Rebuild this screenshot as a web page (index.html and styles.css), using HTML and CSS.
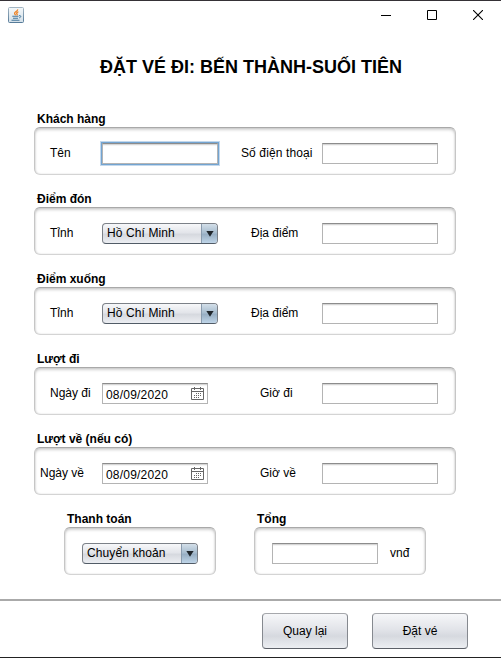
FILE: index.html
```
<!DOCTYPE html>
<html lang="vi">
<head>
<meta charset="utf-8">
<title>Đặt vé</title>
<link rel="stylesheet" href="styles.css">
</head>
<body>
<div class="window">
  <header class="titlebar">
    <svg class="app-icon" width="16" height="16" viewBox="0 0 16 16">
      <defs>
        <linearGradient id="tile" x1="0" y1="0" x2="0" y2="1"><stop offset="0" stop-color="#f4f8fa"/><stop offset="1" stop-color="#d3dfe8"/></linearGradient>
        <linearGradient id="edge" x1="0" y1="0" x2="0" y2="1"><stop offset="0" stop-color="#a3b5c3"/><stop offset="1" stop-color="#567b99"/></linearGradient>
      </defs>
      <rect x=".5" y=".5" width="15" height="15" rx="1" fill="url(#tile)" stroke="url(#edge)"/>
      <path d="M9.7 2.3C10 4.2 6.2 4.7 6.6 6.4c.1.7.7 1.2 1 1.8M10.4 4.8C8.7 5.4 8.2 6.2 9 7c.4.4.2.9-.3 1.4" fill="none" stroke="#ef7d1a" stroke-width="1.2"/>
      <path d="M4.3 9.2h6.2M5 11.3h5M3.5 13.2h8" fill="none" stroke="#47789c" stroke-width="1.1"/>
      <path d="M11 8.7c2.3-.6 2.5 1.6.2 2.2" fill="none" stroke="#47789c"/>
    </svg>
    <div class="window-controls">
      <svg width="10" height="10" viewBox="0 0 10 10"><path d="M0 5.5h10" stroke="#000"/></svg>
      <svg width="10" height="10" viewBox="0 0 10 10"><path d="M.5 .5h9v9h-9z" fill="none" stroke="#000"/></svg>
      <svg width="10" height="10" viewBox="0 0 10 10"><path d="M0 0l10 10M10 0L0 10" stroke="#000" stroke-width="1.1"/></svg>
    </div>
  </header>
  <h1 class="heading">ĐẶT VÉ ĐI: BẾN THÀNH-SUỐI TIÊN</h1>
  <main class="form">
    <section class="group">
      <h2 class="legend">Khách hàng</h2>
      <div class="panel trip-grid">
        <span class="label">Tên</span>
        <span class="input focused"></span>
        <span class="label second phone">Số điện thoại</span>
        <span class="input"></span>
      </div>
    </section>
    <section class="group">
      <h2 class="legend">Điểm đón</h2>
      <div class="panel trip-grid">
        <span class="label">Tỉnh</span>
        <span class="combo"><span class="value">Hồ Chí Minh</span><span class="arrow"><svg width="8" height="6" viewBox="0 0 8 6"><path d="M.4 0h7.2L4 5.8z" fill="#20262c"/></svg></span></span>
        <span class="label second place">Địa điểm</span>
        <span class="input"></span>
      </div>
    </section>
    <section class="group">
      <h2 class="legend">Điểm xuống</h2>
      <div class="panel trip-grid">
        <span class="label">Tỉnh</span>
        <span class="combo"><span class="value">Hồ Chí Minh</span><span class="arrow"><svg width="8" height="6" viewBox="0 0 8 6"><path d="M.4 0h7.2L4 5.8z" fill="#20262c"/></svg></span></span>
        <span class="label second place">Địa điểm</span>
        <span class="input"></span>
      </div>
    </section>
    <section class="group">
      <h2 class="legend">Lượt đi</h2>
      <div class="panel trip-grid">
        <span class="label">Ngày đi</span>
        <span class="input date"><span class="digits">08/09/2020</span><svg width="13" height="13" viewBox="0 0 13 13"><path d="M.5 1.5h12v11H.5zM1 4.5h11M3.5 0v3M9.5 0v3" fill="none" stroke="#666"/><path d="M5 6.5h6M3 8.5h8M3 10.5h6" stroke="#666" stroke-dasharray="1 1"/></svg></span>
        <span class="label second hour">Giờ đi</span>
        <span class="input"></span>
      </div>
    </section>
    <section class="group">
      <h2 class="legend">Lượt về (nếu có)</h2>
      <div class="panel trip-grid">
        <span class="label outdent">Ngày về</span>
        <span class="input date"><span class="digits">08/09/2020</span><svg width="13" height="13" viewBox="0 0 13 13"><path d="M.5 1.5h12v11H.5zM1 4.5h11M3.5 0v3M9.5 0v3" fill="none" stroke="#666"/><path d="M5 6.5h6M3 8.5h8M3 10.5h6" stroke="#666" stroke-dasharray="1 1"/></svg></span>
        <span class="label second hour">Giờ về</span>
        <span class="input"></span>
      </div>
    </section>
    <div class="totals">
      <section class="group payment">
        <h2 class="legend">Thanh toán</h2>
        <div class="panel">
          <span class="combo"><span class="value">Chuyển khoản</span><span class="arrow"><svg width="8" height="6" viewBox="0 0 8 6"><path d="M.4 0h7.2L4 5.8z" fill="#20262c"/></svg></span></span>
        </div>
      </section>
      <section class="group total">
        <h2 class="legend">Tổng</h2>
        <div class="panel">
          <span class="input"></span>
          <span class="label unit">vnđ</span>
        </div>
      </section>
    </div>
  </main>
  <footer class="actions">
    <button class="button back">Quay lại</button>
    <button class="button book">Đặt vé</button>
  </footer>
</div>
</body>
</html>
```
FILE: styles.css
```
* { box-sizing: border-box; }

body {
  margin: 0;
  background: #fff;
  color: #000;
  font: 12px/16px "Liberation Sans", Arial, sans-serif;
}

.window {
  display: flex;
  flex-direction: column;
  width: 501px;
  height: 658px;
  border-top: 1px solid #353136;
  border-bottom: 1px solid #222;
}

.titlebar {
  display: flex;
  justify-content: space-between;
  height: 30px;
  padding: 6px 18px 0 8px;
}

.window-controls {
  display: flex;
  gap: 36px;
  padding-top: 3px;
}

.heading {
  height: 76px;
  margin: 0;
  padding: 25px 0 0 100px;
  font-size: 18px;
  line-height: 22px;
  white-space: nowrap;
}

.form {
  height: 492px;
  padding: 4px 45px 0 34px;
}

.group { height: 80px; }

.legend {
  height: 16px;
  margin: 0;
  padding-left: 3px;
  font-size: 12px;
  line-height: 16px;
  white-space: nowrap;
}

.panel {
  height: 48px;
  padding-top: 16px;
  border: solid;
  border-width: 1px;
  border-color: #a9a9a9 #c6c6c6 #d4d4d4;
  border-radius: 6px;
  box-shadow: inset 0 2px 3px #0000002e, inset 0 0 2px #00000024;
  display: flex;
  padding-top: 15px;
}

.trip-grid {
  display: grid;
  grid-template-columns: 67px 116px 104px 116px;
  align-items: start;
}

.label {
  padding-left: 15px;
  line-height: 21px;
  white-space: nowrap;
}

.outdent { padding-left: 5px; }
.phone { padding-left: 23px; letter-spacing: .12px; }
.place { padding-left: 33px; }
.hour { padding-left: 42px; }

.input {
  display: flex;
  height: 21px;
  background: #fff;
  border: 1px solid #b4b4b4;
  border-top-color: #8c8c8c;
  box-shadow: inset 0 1px #d6d6d6, inset 0 2px #f4f4f4;
}

.focused {
  box-shadow: inset 0 1px #d6d6d6, inset 0 2px #f4f4f4, 0 0 0 1px #73a4d1, 0 0 0 2px #c3d8ec;
}

.date {
  width: 106px;
  justify-content: space-between;
  padding: 3px 3px 0;
}

.digits {
  line-height: 17px;
  letter-spacing: .2px;
}

.combo {
  display: flex;
  justify-content: space-between;
  width: 116px;
  height: 21px;
  border: 1px solid #7c8188;
  border-bottom-color: #515b66;
  border-radius: 4px;
  background: linear-gradient(#f7f8fa, #e3e5ea 45%, #d6d9df 55%, #eceef2);
  overflow: hidden;
}

.value {
  padding-left: 4px;
  line-height: 19px;
  letter-spacing: .1px;
  white-space: nowrap;
}

.arrow {
  width: 16px;
  padding: 7px 0 0 4px;
  border-left: 1px solid #8a9cae;
  background: linear-gradient(#d3dfe9, #a9bed0 45%, #98afc4 55%, #bfd5e8);
}

.arrow svg { display: block; }

.totals {
  display: flex;
  gap: 38px;
  padding-left: 30px;
}

.payment { width: 152px; }
.payment .panel { padding-left: 17px; }
.total { width: 172px; }
.total .panel { padding-left: 17px; }
.total .input { width: 106px; }
.unit { padding-left: 12px; }

.actions {
  display: flex;
  flex: 1;
  gap: 24px;
  padding: 12px 0 0 262px;
  border-top: 2px solid;
  border-image: linear-gradient(#aaa 50%, #777 50%) 2;
}

.button {
  height: 36px;
  padding: 0;
  border: 1px solid #9b9ea4;
  border-color: #a6a8ac #85898f #5c6068;
  border-radius: 4px;
  background: linear-gradient(#f6f7f9, #e2e4e9 45%, #d6d9df 65%, #eceef2);
  color: #000;
  font: inherit;
}

.back { width: 86px; }
.book { width: 96px; }
```
